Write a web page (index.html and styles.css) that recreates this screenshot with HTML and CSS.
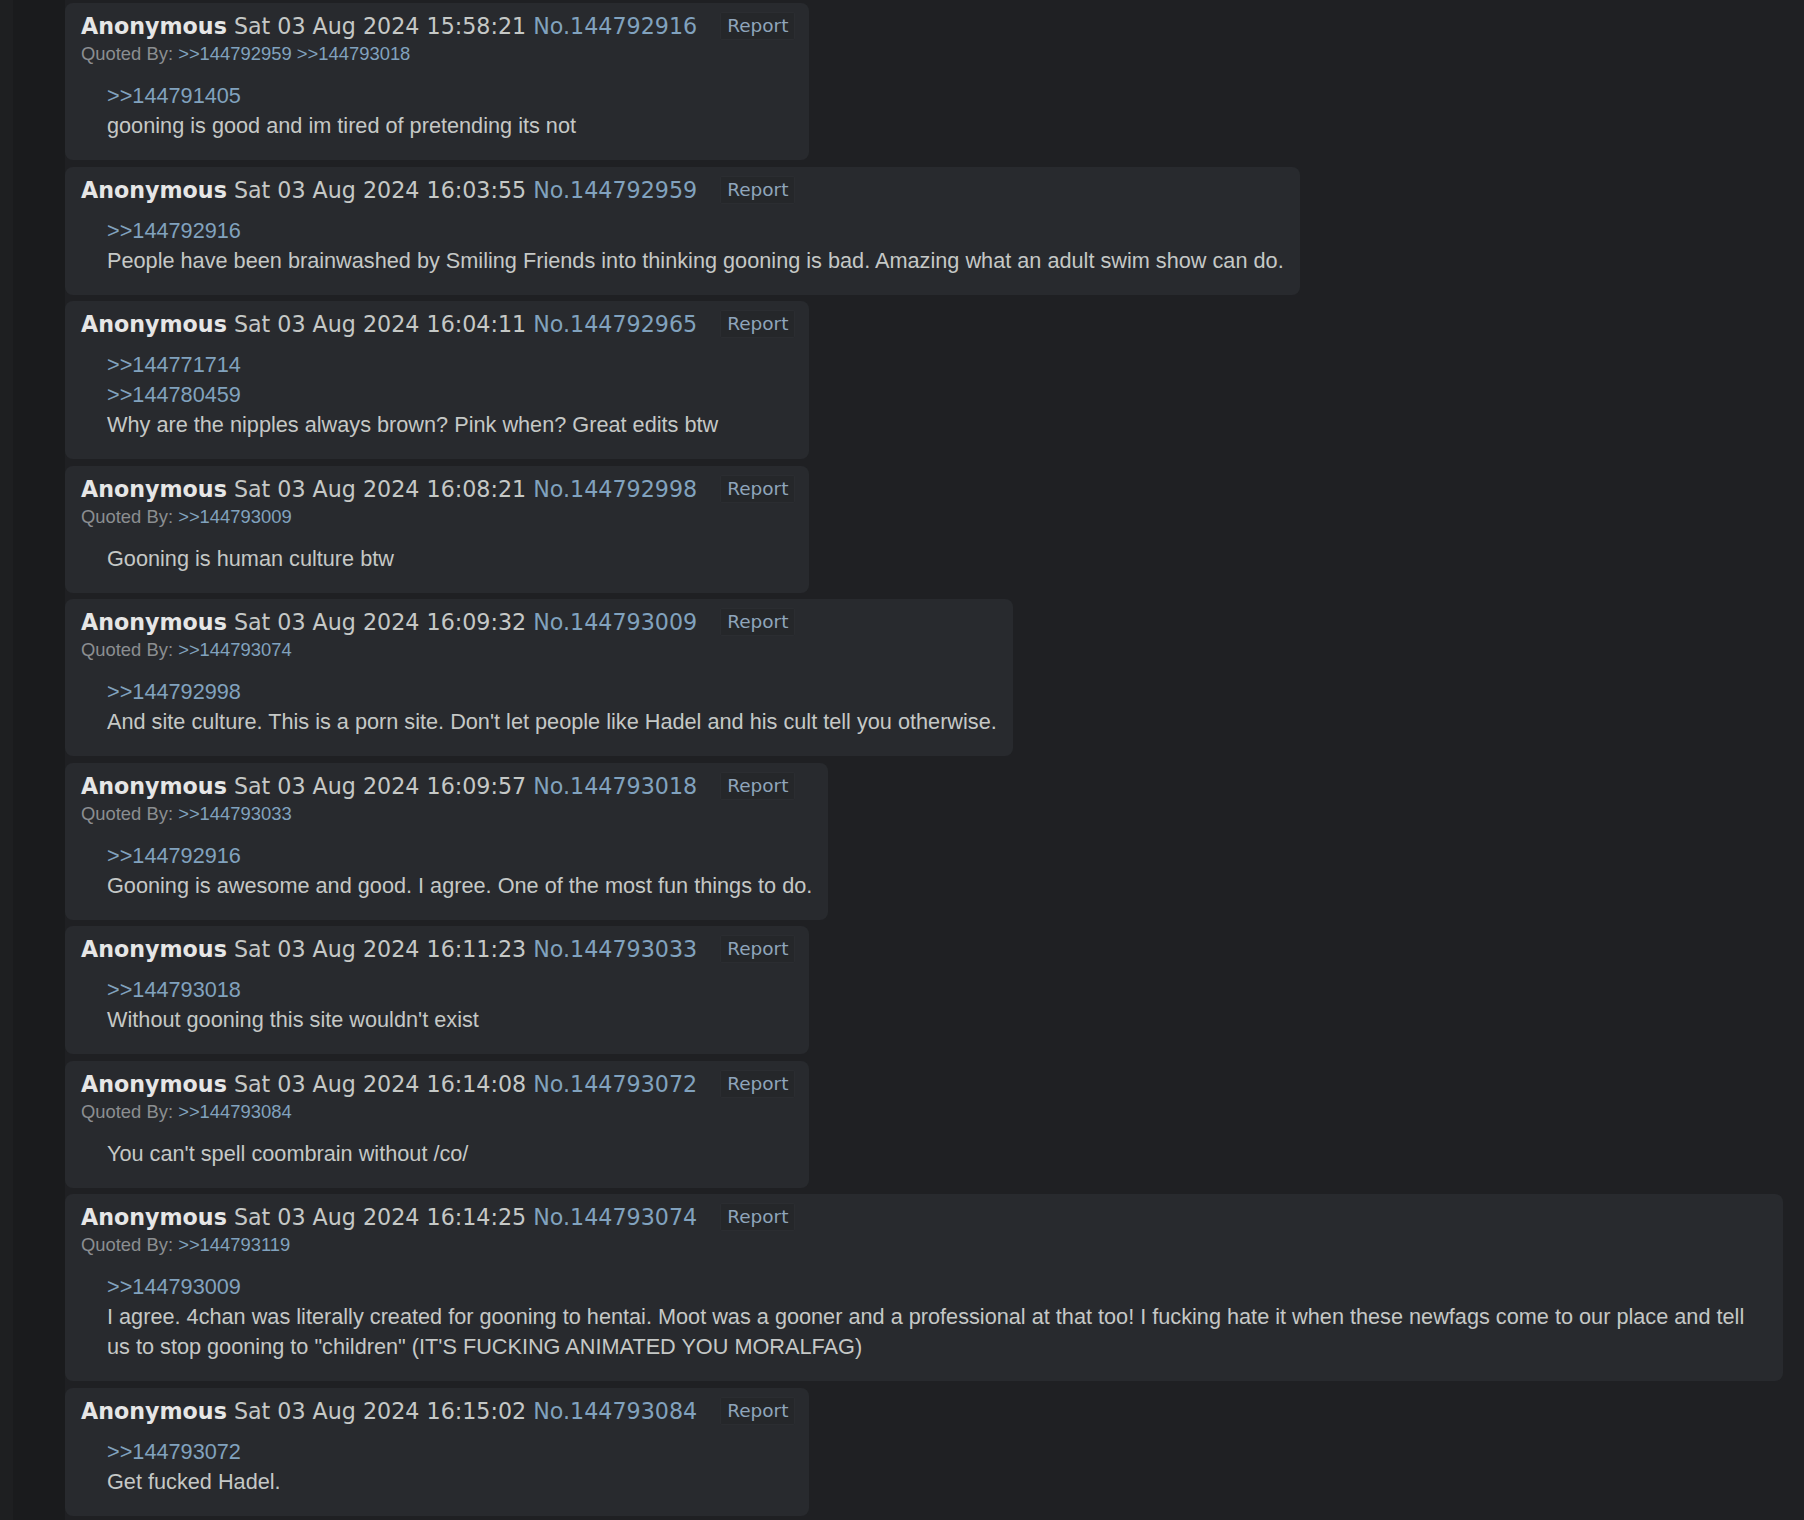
FILE: index.html
```html
<!DOCTYPE html>
<html lang="en">
<head>
<meta charset="utf-8">
<title>Thread</title>
<link rel="stylesheet" href="styles.css">
</head>
<body>
<div class="thread">

  <div class="post">
    <div class="info"><span class="name">Anonymous</span> <span class="date">Sat 03 Aug 2024 15:58:21</span> <a class="num">No.144792916</a><span class="report">Report</span></div>
    <div class="backlinks"><span class="label">Quoted By:</span> <a>&gt;&gt;144792959</a> <a>&gt;&gt;144793018</a></div>
    <div class="body"><a class="ql">&gt;&gt;144791405</a><br>gooning is good and im tired of pretending its not</div>
  </div>

  <div class="post">
    <div class="info"><span class="name">Anonymous</span> <span class="date">Sat 03 Aug 2024 16:03:55</span> <a class="num">No.144792959</a><span class="report">Report</span></div>
    <div class="body"><a class="ql">&gt;&gt;144792916</a><br>People have been brainwashed by Smiling Friends into thinking gooning is bad. Amazing what an adult swim show can do.</div>
  </div>

  <div class="post">
    <div class="info"><span class="name">Anonymous</span> <span class="date">Sat 03 Aug 2024 16:04:11</span> <a class="num">No.144792965</a><span class="report">Report</span></div>
    <div class="body"><a class="ql">&gt;&gt;144771714</a><br><a class="ql">&gt;&gt;144780459</a><br>Why are the nipples always brown? Pink when? Great edits btw</div>
  </div>

  <div class="post">
    <div class="info"><span class="name">Anonymous</span> <span class="date">Sat 03 Aug 2024 16:08:21</span> <a class="num">No.144792998</a><span class="report">Report</span></div>
    <div class="backlinks"><span class="label">Quoted By:</span> <a>&gt;&gt;144793009</a></div>
    <div class="body">Gooning is human culture btw</div>
  </div>

  <div class="post">
    <div class="info"><span class="name">Anonymous</span> <span class="date">Sat 03 Aug 2024 16:09:32</span> <a class="num">No.144793009</a><span class="report">Report</span></div>
    <div class="backlinks"><span class="label">Quoted By:</span> <a>&gt;&gt;144793074</a></div>
    <div class="body"><a class="ql">&gt;&gt;144792998</a><br>And site culture. This is a porn site. Don't let people like Hadel and his cult tell you otherwise.</div>
  </div>

  <div class="post">
    <div class="info"><span class="name">Anonymous</span> <span class="date">Sat 03 Aug 2024 16:09:57</span> <a class="num">No.144793018</a><span class="report">Report</span></div>
    <div class="backlinks"><span class="label">Quoted By:</span> <a>&gt;&gt;144793033</a></div>
    <div class="body"><a class="ql">&gt;&gt;144792916</a><br>Gooning is awesome and good. I agree. One of the most fun things to do.</div>
  </div>

  <div class="post">
    <div class="info"><span class="name">Anonymous</span> <span class="date">Sat 03 Aug 2024 16:11:23</span> <a class="num">No.144793033</a><span class="report">Report</span></div>
    <div class="body"><a class="ql">&gt;&gt;144793018</a><br>Without gooning this site wouldn't exist</div>
  </div>

  <div class="post">
    <div class="info"><span class="name">Anonymous</span> <span class="date">Sat 03 Aug 2024 16:14:08</span> <a class="num">No.144793072</a><span class="report">Report</span></div>
    <div class="backlinks"><span class="label">Quoted By:</span> <a>&gt;&gt;144793084</a></div>
    <div class="body">You can't spell coombrain without /co/</div>
  </div>

  <div class="post">
    <div class="info"><span class="name">Anonymous</span> <span class="date">Sat 03 Aug 2024 16:14:25</span> <a class="num">No.144793074</a><span class="report">Report</span></div>
    <div class="backlinks"><span class="label">Quoted By:</span> <a>&gt;&gt;144793119</a></div>
    <div class="body"><a class="ql">&gt;&gt;144793009</a><br>I agree. 4chan was literally created for gooning to hentai. Moot was a gooner and a professional at that too! I fucking hate it when these newfags come to our place and tell us to stop gooning to "children" (IT'S FUCKING ANIMATED YOU MORALFAG)</div>
  </div>

  <div class="post">
    <div class="info"><span class="name">Anonymous</span> <span class="date">Sat 03 Aug 2024 16:15:02</span> <a class="num">No.144793084</a><span class="report">Report</span></div>
    <div class="body"><a class="ql">&gt;&gt;144793072</a><br>Get fucked Hadel.</div>
  </div>

</div>
</body>
</html>
```

FILE: styles.css
```css
html, body {
  margin: 0;
  padding: 0;
}

body {
  background: linear-gradient(to right, #1e1f21 0, #1e1f21 13px, #1a1b1d 13px, #1a1b1d 65px, #1f2023 65px);
  min-height: 1520px;
  color: #c5c8c6;
}

.thread {
  display: flex;
  flex-direction: column;
  align-items: flex-start;
  gap: 6.5px;
  padding: 3px 21px 0 65px;
}

.post {
  background: #282a2e;
  border-radius: 8px;
  padding: 8px 14px 19px 16px;
  max-width: 100%;
  box-sizing: border-box;
}

.info {
  height: 31px;
  line-height: 31px;
  font-family: "DejaVu Sans", sans-serif;
  font-size: 22.2px;
  white-space: nowrap;
  color: #c5c8c6;
}

.name {
  font-weight: bold;
  color: #e6e6e6;
}

.date {
  color: #c5c8c6;
}

.num {
  color: #81a2be;
}

.report {
  display: inline-block;
  vertical-align: top;
  margin: 1px 0 0 23px;
  height: 28px;
  line-height: 26px;
  padding: 0 6px;
  box-sizing: border-box;
  font-size: 18.5px;
  color: #8fa5bb;
  background: #25272a;
  border: 1px solid #2b2d31;
  border-radius: 2px;
}

.backlinks {
  font-family: "Liberation Sans", Arial, sans-serif;
  font-size: 18.4px;
  line-height: 24px;
}

.backlinks .label {
  color: #8b8e91;
}

.backlinks a {
  color: #81a2be;
}

.body {
  margin: 10px 2px 0 26px;
  font-family: "Liberation Sans", Arial, sans-serif;
  font-size: 21.7px;
  line-height: 30px;
  color: #c5c8c6;
}

.backlinks + .body {
  margin-top: 15px;
}

.ql {
  color: #81a2be;
}
```
